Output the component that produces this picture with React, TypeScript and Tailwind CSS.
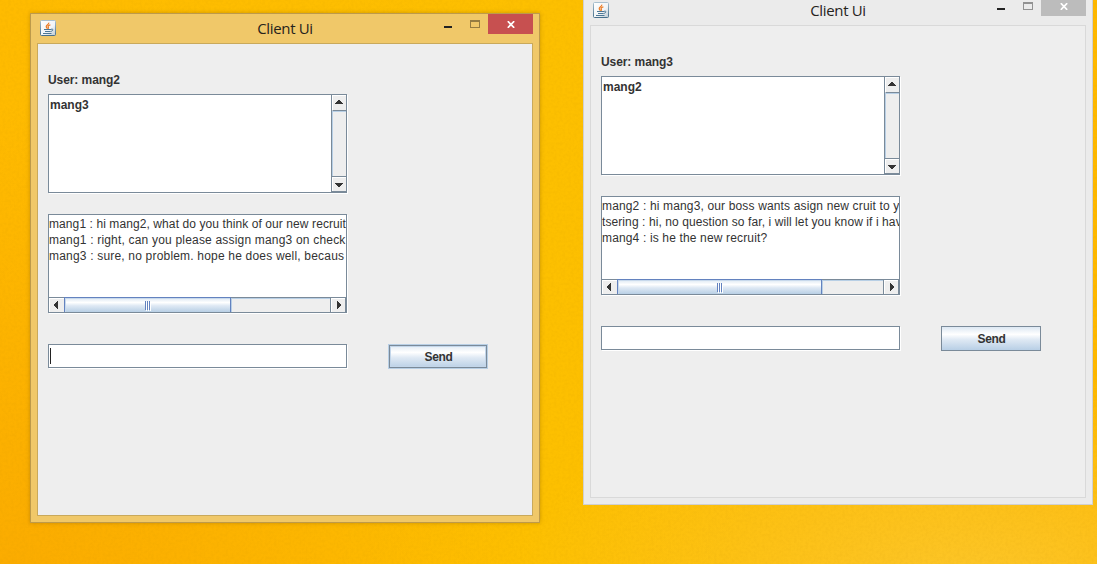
import React from "react";

function JavaIcon() {
  return (
    <svg width="16" height="16" viewBox="0 0 16 16" className="block">
      <defs>
        <linearGradient id="tile" x1="0" y1="0" x2="1" y2="1">
          <stop offset="0" stopColor="#ffffff" />
          <stop offset="0.6" stopColor="#f1f4f6" />
          <stop offset="1" stopColor="#b9c8d2" />
        </linearGradient>
        <linearGradient id="edge" x1="0" y1="0" x2="0" y2="1">
          <stop offset="0" stopColor="#a9c0cf" />
          <stop offset="1" stopColor="#47708c" />
        </linearGradient>
      </defs>
      <rect x="0.5" y="0.5" width="15" height="15" rx="1" fill="url(#tile)" stroke="url(#edge)" />
      <path d="M8.8 2.6C9.3 4.4 6 4.9 6.2 6.6c.1.9 1 1.300 1.300 2.200M10.400 4.800C8.600 5.300 7.700 6 8.200 6.900c.4.7.5 1.200-.2 1.900" fill="none" stroke="#ec7a22" strokeWidth="1.200" />
      <path d="M4 9.500h7M5 11.500h5.500M3 13.500h8.500" fill="none" stroke="#4d7896" strokeWidth="1.100" />
      <path d="M11 9.300c2.600-1 2.600 1.700-.4 2.200" fill="none" stroke="#4d7896" strokeWidth="1" />
    </svg>
  );
}

function Arrow({ dir }: { dir: "up" | "down" | "left" | "right" }) {
  const d = {
    up: "M3 0h2v1h1v1h1v1h1v1H0V3h1V2h1V1h1z",
    down: "M0 0h8v1H7v1H6v1H5v1H3V3H2V2H1V1H0z",
    left: "M4 0v8H3V7H2V6H1V5H0V3h1V2h1V1h1V0z",
    right: "M0 0v8h1V7h1V6h1V5h1V3H3V2H2V1H1V0z",
  }[dir];
  const flat = dir === "up" || dir === "down";
  return (
    <svg width={flat ? 8 : 4} height={flat ? 4 : 8} shapeRendering="crispEdges" className="block shrink-0">
      <path d={d} fill="#333333" />
    </svg>
  );
}

/* Sunken Metal border: dark outline with a white highlight on the lower right. */
function Sunken({ className, children }: { className: string; children?: React.ReactNode }) {
  return (
    <div className={`w-[299px] border border-[#7a8a99] bg-white shadow-[1px_1px_0_#ffffff] ${className}`}>
      {children}
    </div>
  );
}

function UserList({ name }: { name: string }) {
  return (
    <Sunken className="flex h-[99px]">
      <div className="flex-1 pl-px pt-[2px] text-[12px] leading-[16px] font-bold">{name}</div>
      <div className="flex w-[15px] flex-col border-l border-[#7a8a99] bg-[#eeeeee]">
        <div className="flex h-4 border-b border-l border-t border-b-[#7a8a99] border-l-white border-t-white pl-[2px] pt-1">
          <Arrow dir="up" />
        </div>
        <div className="flex-1 border-l border-t border-[#b8cfe5]" />
        <div className="flex h-4 border-y border-[#7a8a99] pl-[3px] pt-[6px] shadow-[inset_1px_1px_0_#ffffff]">
          <Arrow dir="down" />
        </div>
      </div>
    </Sunken>
  );
}

function Messages({ lines, thumb }: { lines: Line[]; thumb: string }) {
  return (
    <Sunken className="flex h-[99px] flex-col">
      <div className="flex-1 overflow-hidden whitespace-pre pt-px text-[12px] leading-[16px]">
        {lines.map((l) => (
          <div key={l.text} className={l.spacing}>{l.text}</div>
        ))}
      </div>
      <div className="flex h-[15px] border-t border-[#7a8a99] bg-[#eeeeee]">
        <div className="flex w-[15px] items-start justify-center pr-px pt-[3px] shadow-[inset_1px_1px_0_#ffffff]">
          <Arrow dir="left" />
        </div>
        <div className={`-mt-px flex items-start justify-center gap-[2px] border-x border-t border-[#6382bf] bg-[linear-gradient(#dde8f3_0%,#ffffff_32%,#dfe9f4_55%,#b8cfe5_100%)] pt-[3px] shadow-[inset_1px_1px_0_#c8d9ec] ${thumb}`}>
          <i className="h-[9px] w-px bg-[#6382bf] shadow-[1px_1px_0_#ffffff]" />
          <i className="-ml-px h-[9px] w-px bg-[#6382bf] shadow-[1px_1px_0_#ffffff]" />
          <i className="-ml-px h-[9px] w-px bg-[#6382bf] shadow-[1px_1px_0_#ffffff]" />
        </div>
        <div className="flex-1 border-l border-t border-[#b8cfe5]" />
        <div className="flex w-4 items-start border-x border-[#7a8a99] pl-[6px] pt-[3px] shadow-[inset_1px_1px_0_#ffffff]">
          <Arrow dir="right" />
        </div>
      </div>
    </Sunken>
  );
}

type Line = { text: string; spacing: string };
type ClientProps = {
  active: boolean;
  user: string;
  peer: string;
  lines: Line[];
  thumb: string;
  place: string;
};

function ClientWindow({ active, user, peer, lines, thumb, place }: ClientProps) {
  return (
    <section
      className={`absolute h-[510px] w-[510px] border px-[6px] pb-[6px] ${place} ${
        active
          ? "border-[#bd9a4b] bg-[#f0c869] shadow-[0_0_4px_rgba(110,75,0,0.35)]"
          : "border-[#d0d0d0] bg-[#ebebeb]"
      }`}
    >
      <header className="flex h-[29px] items-start">
        <div className="w-[94px] pl-[3px] pt-[6px]">
          <JavaIcon />
        </div>
        <h1 className="flex-1 pt-[3px] text-center font-['Open_Sans',sans-serif] text-[15px] leading-[22px] tracking-[-0.35px] text-[#26231c]">
          Client Ui
        </h1>
        <div className="flex w-[94px] items-start">
          <i className="ml-[5px] mt-3 h-[2px] w-2 shrink-0 bg-[#222222]" />
          <i className={`ml-[18px] mt-[6px] h-2 w-[10px] shrink-0 border border-t-2 ${active ? "border-[#957c41]" : "border-[#929292]"}`} />
          <button aria-label="Close" className={`ml-2 flex h-5 w-[45px] shrink-0 justify-center pt-[7px] ${active ? "bg-[#c75050]" : "bg-[#bcbcbc]"}`}>
            <svg width="8" height="7" className="block">
              <path d="M0.800 0.200L7.200 6.800M7.200 0.200L0.800 6.800" stroke="white" strokeWidth="1.700" />
            </svg>
          </button>
        </div>
      </header>
      <main
        className={`h-[473px] w-[496px] border bg-[#eeeeee] pl-[10px] pt-[28px] font-['Liberation_Sans',Arial,sans-serif] text-[#333333] ${
          active ? "border-[#c9a95b]" : "border-[#d9d9d9]"
        }`}
      >
        <div className="h-[22px] text-[12px] leading-[16px] font-bold tracking-[-0.08px]">User: {user}</div>
        <UserList name={peer} />
        <div className="h-[21px]" />
        <Messages lines={lines} thumb={thumb} />
        <div className="mt-[31px] flex">
          <Sunken className="h-6 pl-px pt-[3px]">{active && <div className="h-4 w-px bg-[#222222]" />}</Sunken>
          <button
            className={`ml-[41px] h-[25px] w-[100px] border bg-[linear-gradient(#dde8f3_0%,#ffffff_32%,#dfe9f4_55%,#b8cfe5_100%)] pl-px pt-px text-[12px] leading-[22px] font-bold tracking-[-0.3px] ${
              active
                ? "border-[#b8cfe5] shadow-[inset_0_0_0_1px_#7a8a99,inset_0_0_0_2px_#c3d6ea]"
                : "border-[#7a8a99]"
            }`}
          >
            Send
          </button>
        </div>
      </main>
    </section>
  );
}

export default function App() {
  return (
    <div className="relative h-[564px] w-[1097px] overflow-hidden bg-[radial-gradient(ellipse_460px_220px_at_88%_104%,#fcc62a_0%,rgba(252,198,42,0)_100%),radial-gradient(ellipse_520px_460px_at_1%_100%,#fbac00_0%,rgba(251,172,0,0)_100%),linear-gradient(90deg,#ffbb00_0%,#fdc000_50%,#ffb800_100%)]">
      <svg width="1097" height="564" className="absolute inset-0 opacity-[0.05]">
        <filter id="grain">
          <feTurbulence type="fractalNoise" baseFrequency="0.350" numOctaves="2" seed="4" />
          <feColorMatrix type="matrix" values="0 0 0 0 0.500  0 0 0 0 0.250  0 0 0 0 0  3 0 0 0 -1.100" />
        </filter>
        <rect width="1097" height="564" filter="url(#grain)" />
      </svg>
      <ClientWindow
        active
        user="mang2"
        peer="mang3"
        place="left-[30px] top-[13px]"
        thumb="w-[167px]"
        lines={[
          { text: "mang1 : hi mang2, what do you think of our new recruit", spacing: "tracking-[0.09px]" },
          { text: "mang1 : right, can you please assign mang3 on check", spacing: "tracking-[0.19px]" },
          { text: "mang3 : sure, no problem. hope he does well, becaus", spacing: "tracking-[0.19px]" },
        ]}
      />
      <ClientWindow
        active={false}
        user="mang3"
        peer="mang2"
        place="left-[583px] -top-[5px]"
        thumb="w-[205px]"
        lines={[
          { text: "mang2 : hi mang3, our boss wants asign new cruit to y", spacing: "tracking-[0.15px]" },
          { text: "tsering : hi, no question so far, i will let you know if i hav", spacing: "tracking-[0.09px]" },
          { text: "mang4 : is he the new recruit?", spacing: "tracking-[0.15px]" },
        ]}
      />
    </div>
  );
}
